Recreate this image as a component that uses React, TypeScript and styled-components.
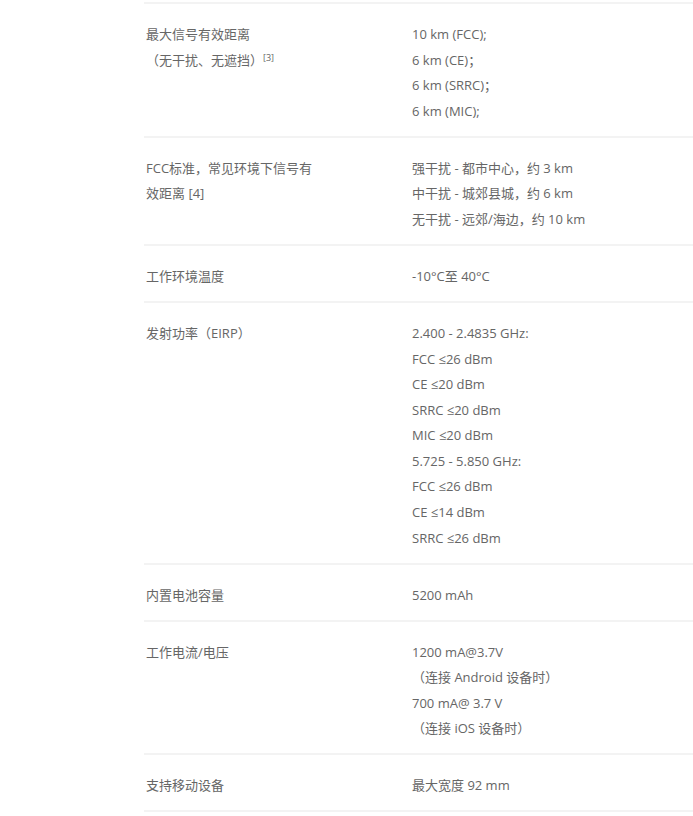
import React from "react";
import styled, { createGlobalStyle } from "styled-components";

const Global = createGlobalStyle`
  html, body { margin: 0; padding: 0; background: #ffffff; }
  body {
    font-family: "Open Sans", "Noto Sans CJK SC", sans-serif;
    -webkit-font-smoothing: antialiased;
  }
`;

const Page = styled.div`
  padding: 2px 0 0 144px;
`;

const SpecList = styled.div`
  border-top: 2px solid #f3f3f3;
`;

const Row = styled.div`
  display: grid;
  grid-template-columns: 266px 1fr;
  padding: 18px 0 11.4px 2px;
  border-bottom: 2px solid #f3f3f3;
  font-size: 13px;
  line-height: 25.6px;
  color: #666666;
`;

const Label = styled.div`
  max-width: 178px;
`;

const Values = styled.div`
  display: flex;
  flex-direction: column;
`;

const Line = styled.div``;

const Sup = styled.sup`
  font-size: 9px;
  line-height: 0;
  vertical-align: 4px;
  margin-left: 0;
`;

type Spec = { label: React.ReactNode; values: React.ReactNode[] };

const specs: Spec[] = [
  {
    label: (
      <>
        最大信号有效距离
        <br />
        （无干扰、无遮挡）<Sup>[3]</Sup>
      </>
    ),
    values: ["10 km (FCC);", "6 km (CE)；", "6 km (SRRC)；", "6 km (MIC);"],
  },
  {
    label: "FCC标准，常见环境下信号有效距离 [4]",
    values: [
      "强干扰 - 都市中心，约 3 km",
      "中干扰 - 城郊县城，约 6 km",
      "无干扰 - 远郊/海边，约 10 km",
    ],
  },
  { label: "工作环境温度", values: ["-10°C至 40°C"] },
  {
    label: "发射功率（EIRP）",
    values: [
      "2.400 - 2.4835 GHz:",
      "FCC ≤26 dBm",
      "CE ≤20 dBm",
      "SRRC ≤20 dBm",
      "MIC ≤20 dBm",
      "5.725 - 5.850 GHz:",
      "FCC ≤26 dBm",
      "CE ≤14 dBm",
      "SRRC ≤26 dBm",
    ],
  },
  { label: "内置电池容量", values: ["5200 mAh"] },
  {
    label: "工作电流/电压",
    values: [
      "1200 mA@3.7V",
      "（连接 Android 设备时）",
      "700 mA@ 3.7 V",
      "（连接 iOS 设备时）",
    ],
  },
  { label: "支持移动设备", values: ["最大宽度 92 mm"] },
];

export default function App() {
  return (
    <>
      <Global />
      <Page>
        <SpecList>
          {specs.map((s, i) => (
            <Row key={i}>
              <Label>{s.label}</Label>
              <Values>
                {s.values.map((v, j) => (
                  <Line key={j}>{v}</Line>
                ))}
              </Values>
            </Row>
          ))}
        </SpecList>
      </Page>
    </>
  );
}
